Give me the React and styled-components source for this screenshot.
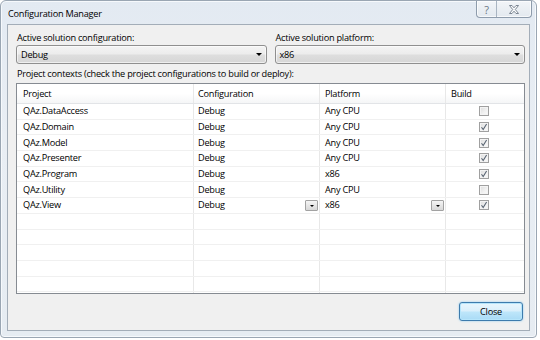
import React from "react";
import styled, { createGlobalStyle } from "styled-components";

const Global = createGlobalStyle`
  html, body { margin: 0; padding: 0; background: #ffffff; }
  body { font-family: "Open Sans", "Noto Sans", "Liberation Sans", sans-serif; font-size: 9.2px; letter-spacing: -0.25px; color: #000; }
  * { box-sizing: border-box; }
`;

const Window = styled.div`
  width: 537px;
  height: 338px;
  border: 1px solid #9aa6b3;
  border-radius: 6px 6px 4px 4px;
  background: linear-gradient(180deg, #e3eaf2 0%, #e9eef4 40%, #e6ecf2 100%);
  box-shadow: inset 0 0 0 1px #f6f9fc;
  padding: 0 6px 6px 6px;
  display: flex;
  flex-direction: column;
`;

const TitleBar = styled.div`
  height: 23px;
  display: flex;
  align-items: flex-start;
  margin-right: -2px;
`;

const Title = styled.div`
  flex: 1;
  padding: 7px 0 0 1px;
  line-height: 12px;
  color: #000;
`;

const CaptionButtons = styled.div`
  display: flex;
  height: 17px;
  border: 1px solid #8e9cac;
  border-top: none;
  border-radius: 0 0 4px 4px;
  overflow: hidden;
  background: linear-gradient(180deg, #f2f5f8 0%, #e3e9ef 100%);
  box-shadow: inset 0 0 0 1px rgba(255,255,255,0.7);
`;

const CaptionButton = styled.div`
  width: ${(p) => p.$w}px;
  display: flex;
  align-items: center;
  justify-content: center;
  border-left: ${(p) => (p.$sep ? "1px solid #a9b5c2" : "none")};
  color: #6b7785;
  font-size: 11px;
  line-height: 1;
`;

const Client = styled.div`
  flex: 1;
  border: 1px solid #a3adb8;
  background: #f0f0f0;
  padding: 6px 4px 9px 8px;
  display: flex;
  flex-direction: column;
`;

const TopGrid = styled.div`
  display: grid;
  grid-template-columns: 1fr 1fr;
  column-gap: 8px;
`;

const Field = styled.div`
  display: flex;
  flex-direction: column;
`;

const Label = styled.div`
  line-height: 14px;
  padding-left: 1px;
  margin-top: ${(p) => p.$mt || 0}px;
`;

const Combo = styled.div`
  height: 19px;
  border: 1px solid #8f8f8f;
  border-radius: 3px;
  background: linear-gradient(180deg, #f4f4f4 0%, #ececec 48%, #dedede 52%, #d6d6d6 100%);
  box-shadow: inset 0 0 0 1px rgba(255,255,255,0.6);
  display: flex;
  align-items: center;
  justify-content: space-between;
  padding: 0 4px 0 4px;
`;

const Arrow = styled.span`
  width: 0;
  height: 0;
  border-left: ${(p) => p.$s}px solid transparent;
  border-right: ${(p) => p.$s}px solid transparent;
  border-top: ${(p) => p.$s}px solid #000;
`;

const Table = styled.div`
  margin-top: 2px;
  height: 211px;
  border: 1px solid #868b92;
  background: #fff;
  display: flex;
  flex-direction: column;
  overflow: hidden;
`;

const Row = styled.div`
  display: grid;
  grid-template-columns: 177px 126px 126px 1fr;
  height: ${(p) => (p.$header ? 20 : 15.7)}px;
  flex: none;
  border-bottom: 1px solid ${(p) => (p.$header ? "#e2e4e7" : "#f0f0f0")};
  background: ${(p) =>
    p.$header ? "linear-gradient(180deg, #ffffff 0%, #ffffff 50%, #f5f6f7 100%)" : "#fff"};
`;

const Cell = styled.div`
  position: relative;
  display: flex;
  align-items: center;
  justify-content: ${(p) => (p.$center ? "center" : "flex-start")};
  padding-left: ${(p) => (p.$center ? 0 : p.$pl || 5)}px;
  padding-right: ${(p) => (p.$center ? 2 : 0)}px;
  border-right: ${(p) => (p.$last ? "none" : "1px solid #e8e8e8")};
  white-space: nowrap;
  line-height: 12px;
`;

const Filler = styled.div`
  flex: 1;
  display: grid;
  grid-template-columns: 177px 126px 126px 1fr;
`;

const CellButton = styled.div`
  position: absolute;
  right: 1px;
  top: 2px;
  width: 13px;
  height: 11px;
  border: 1px solid #a2a2a2;
  border-radius: 1px;
  background: linear-gradient(180deg, #f5f5f5 0%, #e6e6e6 50%, #d8d8d8 100%);
  display: flex;
  align-items: center;
  justify-content: center;
`;

const Check = styled.div`
  width: 10px;
  height: 10px;
  border: 1px solid #a0a0a0;
  background: linear-gradient(135deg, #dcdcdc 0%, #f2f2f2 60%, #fbfbfb 100%);
  box-shadow: inset 0 0 0 1px #f4f4f4;
  display: flex;
  align-items: center;
  justify-content: center;
`;

const Footer = styled.div`
  margin-top: auto;
  display: flex;
  justify-content: flex-end;
  padding-right: 2px;
`;

const Button = styled.div`
  width: 64px;
  height: 19px;
  border: 1px solid #3d7bad;
  border-radius: 3px;
  background: linear-gradient(180deg, #e9f6fd 0%, #d9effb 48%, #bee6fa 52%, #a9dbf6 100%);
  box-shadow: inset 0 0 0 1px #b6e5fb, 0 0 2px #7fc6ef;
  display: flex;
  align-items: center;
  justify-content: center;
  line-height: 12px;
`;

const CheckMark = () => (
  <svg width="8" height="8" viewBox="0 0 8 8">
    <path d="M1.5 4.2 L3.2 6.6 L6.6 1" fill="none" stroke="#5a6573" strokeWidth="1.1" />
  </svg>
);

const CloseGlyph = () => (
  <svg width="10" height="9" viewBox="0 0 10 9">
    <path
      d="M0.5 0.5 H3 L5 2.8 L7 0.5 H9.5 L6.3 4.5 L9.5 8.5 H7 L5 6.2 L3 8.5 H0.5 L3.7 4.5 Z"
      fill="#fbfcfd"
      stroke="#6f7b88"
      strokeWidth="0.9"
      strokeLinejoin="round"
    />
  </svg>
);

const projects = [
  { name: "QAz.DataAccess", config: "Debug", platform: "Any CPU", build: false },
  { name: "QAz.Domain", config: "Debug", platform: "Any CPU", build: true },
  { name: "QAz.Model", config: "Debug", platform: "Any CPU", build: true },
  { name: "QAz.Presenter", config: "Debug", platform: "Any CPU", build: true },
  { name: "QAz.Program", config: "Debug", platform: "x86", build: true },
  { name: "QAz.Utility", config: "Debug", platform: "Any CPU", build: false },
  { name: "QAz.View", config: "Debug", platform: "x86", build: true, editing: true },
];

export default function App() {
  return (
    <>
      <Global />
      <Window>
        <TitleBar>
          <Title>Configuration Manager</Title>
          <CaptionButtons>
            <CaptionButton $w={19}>?</CaptionButton>
            <CaptionButton $w={35} $sep>
              <CloseGlyph />
            </CaptionButton>
          </CaptionButtons>
        </TitleBar>
        <Client>
          <TopGrid>
            <Field>
              <Label>Active solution configuration:</Label>
              <Combo>
                <span>Debug</span>
                <Arrow $s={3} />
              </Combo>
            </Field>
            <Field>
              <Label>Active solution platform:</Label>
              <Combo>
                <span>x86</span>
                <Arrow $s={3} />
              </Combo>
            </Field>
          </TopGrid>
          <Label $mt={3}>Project contexts (check the project configurations to build or deploy):</Label>
          <Table>
            <Row $header>
              <Cell $pl={6}>Project</Cell>
              <Cell $pl={4}>Configuration</Cell>
              <Cell>Platform</Cell>
              <Cell $last>Build</Cell>
            </Row>
            {projects.map((p) => (
              <Row key={p.name}>
                <Cell $pl={6}>{p.name}</Cell>
                <Cell $pl={4}>
                  {p.config}
                  {p.editing && (
                    <CellButton>
                      <Arrow $s={2.5} />
                    </CellButton>
                  )}
                </Cell>
                <Cell>
                  {p.platform}
                  {p.editing && (
                    <CellButton>
                      <Arrow $s={2.5} />
                    </CellButton>
                  )}
                </Cell>
                <Cell $last $center>
                  <Check>{p.build && <CheckMark />}</Check>
                </Cell>
              </Row>
            ))}
            {[0, 1, 2, 3, 4].map((i) => (
              <Row key={"e" + i}>
                <Cell />
                <Cell />
                <Cell />
                <Cell $last />
              </Row>
            ))}
            <Filler>
              <Cell />
              <Cell />
              <Cell />
              <Cell $last />
            </Filler>
          </Table>
          <Footer>
            <Button>Close</Button>
          </Footer>
        </Client>
      </Window>
    </>
  );
}
